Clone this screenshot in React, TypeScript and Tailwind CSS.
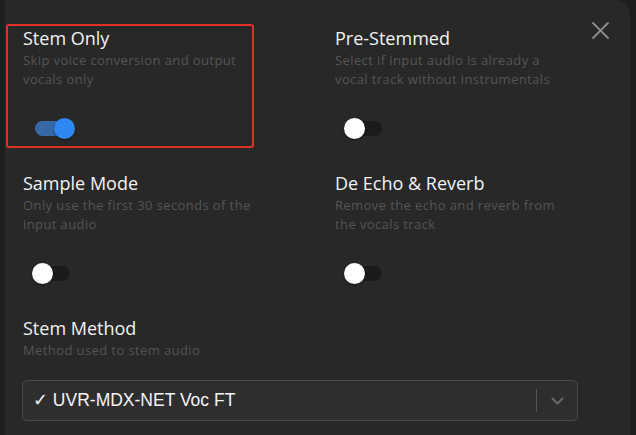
import React from "react";

function Toggle({ on }: { on: boolean }) {
  return (
    <div className="relative w-[58px] h-[38px]">
      <div
        className={
          "absolute left-[12px] top-[12px] w-[35px] h-[15px] rounded-full " +
          (on ? "bg-[#3768a8]" : "bg-[#1b1b1b]")
        }
      />
      <div
        className={
          "absolute top-[9px] w-[21px] h-[21px] rounded-full shadow-[0_1px_2px_rgba(0,0,0,0.5)] " +
          (on ? "left-[31px] bg-[#2f87f4]" : "left-[9px] bg-white")
        }
      />
    </div>
  );
}

function Setting({ title, desc, on }: { title: string; desc: React.ReactNode; on: boolean }) {
  return (
    <div className="flex flex-col">
      <div className="text-[18px] leading-[26px] text-[#f2f2f2] font-medium">{title}</div>
      <div className="text-[13px] leading-[19px] text-[#555555] tracking-[0.4px] w-[260px]">{desc}</div>
      <div className="mt-[20px]">
        <Toggle on={on} />
      </div>
    </div>
  );
}

export default function App() {
  return (
    <div
      className="w-[636px] h-[435px] bg-[#1e1e1e] overflow-hidden"
      style={{ fontFamily: '"Open Sans", "Noto Sans", sans-serif' }}
    >
      <div className="relative ml-[5px] w-[625px] h-[435px] bg-[#282828] rounded-tr-[14px] pt-[25px] pl-[18px]">
        {/* red highlight annotation */}
        <div className="absolute left-[1px] top-[24px] w-[248px] h-[124px] border-2 border-[#e0302a] rounded-[3px] pointer-events-none" />
        {/* close */}
        <svg
          className="absolute right-[21px] top-[22px]"
          width="17"
          height="17"
          viewBox="0 0 17 17"
          fill="none"
          stroke="#8c8c8c"
          strokeWidth="1.8"
          strokeLinecap="round"
        >
          <path d="M1 1L16 16M16 1L1 16" />
        </svg>

        <div className="grid grid-cols-[312px_1fr] gap-y-[23px]">
          <Setting
            title="Stem Only"
            desc={<>Skip voice conversion and output<br />vocals only</>}
            on={true}
          />
          <Setting
            title="Pre-Stemmed"
            desc={<>Select if input audio is already a<br />vocal track without instrumentals</>}
            on={false}
          />
          <Setting
            title="Sample Mode"
            desc={<>Only use the first 30 seconds of the<br />input audio</>}
            on={false}
          />
          <Setting
            title="De Echo & Reverb"
            desc={<>Remove the echo and reverb from<br />the vocals track</>}
            on={false}
          />
        </div>

        <div className="mt-[23px] flex flex-col">
          <div className="text-[18px] leading-[26px] text-[#f2f2f2] font-medium">Stem Method</div>
          <div className="text-[13px] leading-[19px] text-[#555555] tracking-[0.4px]">Method used to stem audio</div>
          <div className="mt-[20px] -ml-[1px] w-[556px] h-[41px] rounded-[5px] border border-[#4a4a4a] bg-[#2e2e2e] flex items-center">
            <div
              className="flex-1 pl-[10px] text-[17.5px] text-[#f4f4f4]"
              style={{ fontFamily: '"Liberation Sans", Arial, sans-serif' }}
            >
              ✓ UVR-MDX-NET Voc FT
            </div>
            <div className="w-px h-[23px] bg-[#555555]" />
            <div className="w-[40px] flex items-center justify-center">
              <svg width="13" height="8" viewBox="0 0 13 8" fill="none" stroke="#6a6a6a" strokeWidth="2" strokeLinecap="round" strokeLinejoin="round">
                <path d="M1.5 1.5L6.5 6.5L11.5 1.5" />
              </svg>
            </div>
          </div>
        </div>
      </div>
    </div>
  );
}
